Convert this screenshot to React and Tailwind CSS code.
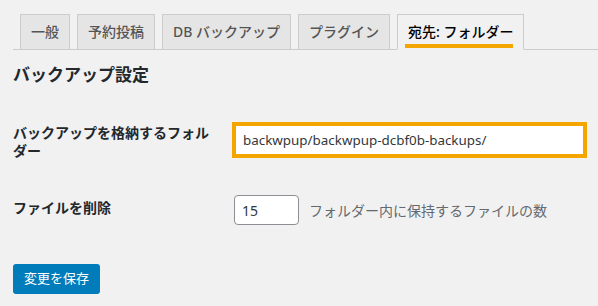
const tabs = ["一般", "予約投稿", "DB バックアップ", "プラグイン"];

export default function App() {
  return (
    <div
      className="min-h-[306px] w-[598px] bg-[#f1f1f1] pl-[13px] text-[14px] text-[#23282d]"
      style={{ fontFamily: '"Noto Sans", "Noto Sans CJK JP", sans-serif' }}
    >
      {/* tab bar */}
      <div className="flex border-b border-[#cccccc] pt-[14px]">
        {tabs.map((t) => (
          <div
            key={t}
            className="-mb-px ml-[7px] border border-[#cccccc] bg-[#e5e5e5] px-[10px] py-[5px] font-medium leading-[24px] text-[#555555]"
          >
            {t}
          </div>
        ))}
        <div className="-mb-px ml-[7px] border border-[#cccccc] border-b-[#f1f1f1] bg-[#f1f1f1] px-[10px] py-[5px] font-medium leading-[24px] text-black">
          <span className="relative block">
            宛先: フォルダー
            <span className="absolute -left-[3px] right-0 top-[24px] h-[4px] bg-[#f5a500]" />
          </span>
        </div>
      </div>

      <h2 className="mt-[13px] text-[17px] font-bold leading-[24px] text-[#23282d]">
        バックアップ設定
      </h2>

      {/* folder row */}
      <div className="mt-[35px] flex h-[39px] items-start">
        <div className="w-[219px] pr-[19px] pt-[2px] font-semibold leading-[18px]">
          バックアップを格納するフォルダー
        </div>
        <div className="flex h-[36px] w-[355px] items-center border-[4px] border-[#f5a500] bg-white pl-[7px] text-[13.4px] text-[#32373c]">
          backwpup/backwpup-dcbf0b-backups/
        </div>
      </div>

      {/* delete row */}
      <div className="mt-[34px] flex items-start">
        <div className="w-[221px] pt-[4px] font-semibold leading-[18px]">
          ファイルを削除
        </div>
        <div className="flex items-center">
          <div className="flex h-[30px] w-[65px] items-center rounded-[4px] border border-[#8c8f94] bg-white pl-[7px] text-[#32373c]">
            15
          </div>
          <span className="ml-[10px] text-[#646970]">
            フォルダー内に保持するファイルの数
          </span>
        </div>
      </div>

      <button className="mt-[39px] flex h-[30px] w-[87px] items-center justify-center rounded-[3px] bg-[#007cba] text-[13px] text-white">
        変更を保存
      </button>
    </div>
  );
}
